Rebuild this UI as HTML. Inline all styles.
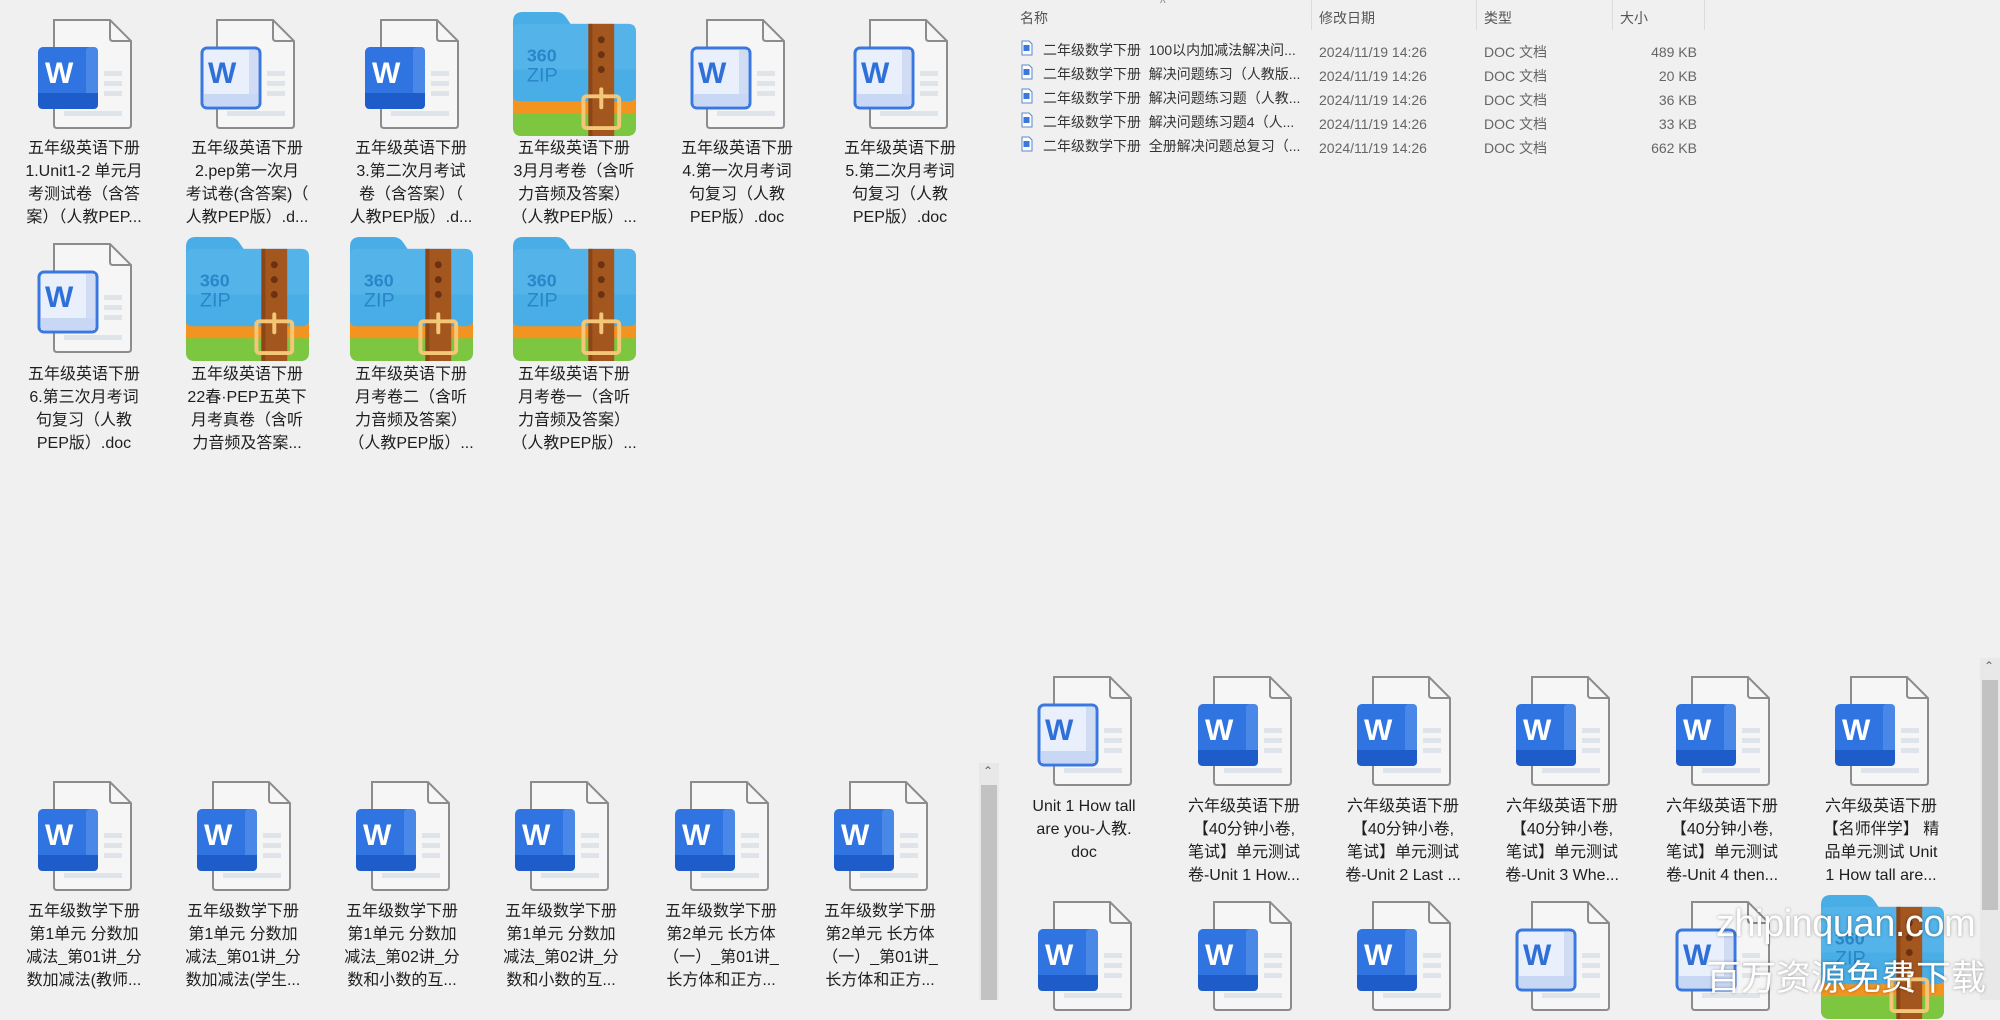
<!DOCTYPE html>
<html><head><meta charset="utf-8"><style>
body{margin:0;width:2000px;height:1000px;background:#f0f0f0;overflow:hidden;position:relative;font-family:"Liberation Sans","Noto Sans CJK SC",sans-serif;color:#1e1e1e}
.i{position:absolute}
.t{position:absolute;width:150px;text-align:center;font-size:16px;line-height:23px;white-space:nowrap}
.h{position:absolute;font-size:14px;color:#555;top:8px}
.r{position:absolute;font-size:14px;color:#333;white-space:nowrap}
.g{color:#666}
</style></head><body>
<svg width="0" height="0" style="position:absolute">
<defs>
<symbol id="page" viewBox="0 0 100 110">
<path d="M20 1H76L97 22V106Q97 109 94 109H23Q20 109 20 106Z" fill="#f6f6f6" stroke="#8c8c8c" stroke-width="2"/>
<path d="M76 1V19Q76 22 79 22H97" fill="none" stroke="#8c8c8c" stroke-width="2"/>
<rect x="70" y="52" width="18" height="5" fill="#dfe3ea"/><rect x="70" y="62" width="18" height="5" fill="#dfe3ea"/><rect x="70" y="72" width="18" height="5" fill="#dfe3ea"/><rect x="30" y="92" width="58" height="5" fill="#dfe3ea"/>
</symbol>
<symbol id="ds" viewBox="0 0 100 110">
<use href="#page"/>
<rect x="4" y="28" width="60" height="62" rx="5" fill="#2f74e0"/>
<rect x="52" y="28" width="12" height="62" rx="4" fill="#4a88e8"/>
<path d="M4 74H64V85Q64 90 59 90H9Q4 90 4 85Z" fill="#1d5cc9"/>
<text x="11" y="64" font-family="Liberation Sans" font-weight="bold" font-size="30" fill="#fff">W</text>
</symbol>
<symbol id="do" viewBox="0 0 100 110">
<use href="#page"/>
<rect x="5" y="29" width="58" height="60" rx="5" fill="#eaf0fb" stroke="#3a78e0" stroke-width="3"/>
<rect x="52" y="31" width="9" height="56" fill="#cfdcf4"/>
<rect x="7" y="75" width="54" height="12" fill="#c8d8f4"/>
<text x="11" y="64" font-family="Liberation Sans" font-weight="bold" font-size="30" fill="#2f6fd8">W</text>
</symbol>
<symbol id="zip" viewBox="0 0 128 128">
<path d="M2 12Q2 2 12 2H46Q52 2 56 8L60 14H118Q126 14 126 22V118Q126 127 117 127H11Q2 127 2 118Z" fill="#4aaee6"/>
<path d="M2 20Q2 14 10 14H118Q126 14 126 22V60H2Z" fill="#5bb8ec" opacity=".6"/>
<path d="M2 87Q2 92 10 92H118Q126 92 126 86V106H2Z" fill="#f39420"/>
<path d="M2 104H126V118Q126 127 117 127H11Q2 127 2 118Z" fill="#7cc640"/>
<rect x="78" y="14" width="26" height="113" fill="#a4561f"/>
<rect x="78" y="14" width="4" height="113" fill="#8b4516"/>
<circle cx="91" cy="30" r="3.5" fill="#6a3210"/><circle cx="91" cy="45" r="3.5" fill="#6a3210"/><circle cx="91" cy="60" r="3.5" fill="#6a3210"/>
<rect x="73" y="87" width="36" height="32" rx="3" fill="none" stroke="#f3c777" stroke-width="4"/>
<rect x="89" y="78" width="4" height="22" rx="2" fill="#f3c777"/>
<text x="16" y="52" font-family="Liberation Sans" font-size="18" fill="#2a86c8" font-weight="bold">360</text>
<text x="16" y="72" font-family="Liberation Sans" font-size="20" fill="#2a86c8">ZIP</text>
</symbol>
<symbol id="sm" viewBox="0 0 12 16"><path d="M1 1H8L11 4V15H1Z" fill="#fff" stroke="#5a88c8"/><rect x="2.5" y="5" width="6" height="6" fill="#3a78e0"/></symbol>
</defs></svg>

<!-- top-left row1 -->
<svg class="i" style="left:34px;top:19px" width="100" height="110"><use href="#ds"/></svg>
<svg class="i" style="left:197px;top:19px" width="100" height="110"><use href="#do"/></svg>
<svg class="i" style="left:361px;top:19px" width="100" height="110"><use href="#ds"/></svg>
<svg class="i" style="left:511px;top:10px" width="127" height="127"><use href="#zip"/></svg>
<svg class="i" style="left:687px;top:19px" width="100" height="110"><use href="#do"/></svg>
<svg class="i" style="left:850px;top:19px" width="100" height="110"><use href="#do"/></svg>
<div class="t" style="left:9px;top:137px">五年级英语下册<br>1.Unit1-2 单元月<br>考测试卷（含答<br>案）（人教PEP...</div>
<div class="t" style="left:172px;top:137px">五年级英语下册<br>2.pep第一次月<br>考试卷(含答案)（<br>人教PEP版）.d...</div>
<div class="t" style="left:336px;top:137px">五年级英语下册<br>3.第二次月考试<br>卷（含答案）（<br>人教PEP版）.d...</div>
<div class="t" style="left:499px;top:137px">五年级英语下册<br>3月月考卷（含听<br>力音频及答案）<br>（人教PEP版）...</div>
<div class="t" style="left:662px;top:137px">五年级英语下册<br>4.第一次月考词<br>句复习（人教<br>PEP版）.doc</div>
<div class="t" style="left:825px;top:137px">五年级英语下册<br>5.第二次月考词<br>句复习（人教<br>PEP版）.doc</div>
<!-- row2 -->
<svg class="i" style="left:34px;top:243px" width="100" height="110"><use href="#do"/></svg>
<svg class="i" style="left:184px;top:235px" width="127" height="127"><use href="#zip"/></svg>
<svg class="i" style="left:348px;top:235px" width="127" height="127"><use href="#zip"/></svg>
<svg class="i" style="left:511px;top:235px" width="127" height="127"><use href="#zip"/></svg>
<div class="t" style="left:9px;top:363px">五年级英语下册<br>6.第三次月考词<br>句复习（人教<br>PEP版）.doc</div>
<div class="t" style="left:172px;top:363px">五年级英语下册<br>22春·PEP五英下<br>月考真卷（含听<br>力音频及答案...</div>
<div class="t" style="left:336px;top:363px">五年级英语下册<br>月考卷二（含听<br>力音频及答案）<br>（人教PEP版）...</div>
<div class="t" style="left:499px;top:363px">五年级英语下册<br>月考卷一（含听<br>力音频及答案）<br>（人教PEP版）...</div>

<!-- bottom-left -->
<svg class="i" style="left:34px;top:781px" width="100" height="110"><use href="#ds"/></svg>
<svg class="i" style="left:193px;top:781px" width="100" height="110"><use href="#ds"/></svg>
<svg class="i" style="left:352px;top:781px" width="100" height="110"><use href="#ds"/></svg>
<svg class="i" style="left:511px;top:781px" width="100" height="110"><use href="#ds"/></svg>
<svg class="i" style="left:671px;top:781px" width="100" height="110"><use href="#ds"/></svg>
<svg class="i" style="left:830px;top:781px" width="100" height="110"><use href="#ds"/></svg>
<div class="t" style="left:9px;top:900px">五年级数学下册<br>第1单元 分数加<br>减法_第01讲_分<br>数加减法(教师...</div>
<div class="t" style="left:168px;top:900px">五年级数学下册<br>第1单元 分数加<br>减法_第01讲_分<br>数加减法(学生...</div>
<div class="t" style="left:327px;top:900px">五年级数学下册<br>第1单元 分数加<br>减法_第02讲_分<br>数和小数的互...</div>
<div class="t" style="left:486px;top:900px">五年级数学下册<br>第1单元 分数加<br>减法_第02讲_分<br>数和小数的互...</div>
<div class="t" style="left:646px;top:900px">五年级数学下册<br>第2单元 长方体<br>（一）_第01讲_<br>长方体和正方...</div>
<div class="t" style="left:805px;top:900px">五年级数学下册<br>第2单元 长方体<br>（一）_第01讲_<br>长方体和正方...</div>
<div style="position:absolute;left:979px;top:763px;width:20px;height:237px;background:#e8e8e8"></div>
<div style="position:absolute;left:981px;top:785px;width:16px;height:215px;background:#c2c2c2"></div>
<div style="position:absolute;left:983px;top:764px;font-size:12px;color:#666">&#8963;</div>

<!-- top-right list -->
<div style="position:absolute;left:1160px;top:-4px;font-size:12px;color:#888">^</div>
<div class="h" style="left:1020px">名称</div>
<div class="h" style="left:1319px">修改日期</div>
<div class="h" style="left:1484px">类型</div>
<div class="h" style="left:1620px">大小</div>
<div style="position:absolute;left:1311px;top:0;width:1px;height:30px;background:#dcdcdc"></div>
<div style="position:absolute;left:1476px;top:0;width:1px;height:30px;background:#dcdcdc"></div>
<div style="position:absolute;left:1612px;top:0;width:1px;height:30px;background:#dcdcdc"></div>
<div style="position:absolute;left:1704px;top:0;width:1px;height:30px;background:#dcdcdc"></div>

<svg class="i" style="left:1021px;top:40px" width="12" height="16"><use href="#sm"/></svg>
<div class="r" style="left:1043px;top:40px">二年级数学下册&nbsp; 100以内加减法解决问...</div>
<svg class="i" style="left:1021px;top:64px" width="12" height="16"><use href="#sm"/></svg>
<div class="r" style="left:1043px;top:64px">二年级数学下册&nbsp; 解决问题练习（人教版...</div>
<svg class="i" style="left:1021px;top:88px" width="12" height="16"><use href="#sm"/></svg>
<div class="r" style="left:1043px;top:88px">二年级数学下册&nbsp; 解决问题练习题（人教...</div>
<svg class="i" style="left:1021px;top:112px" width="12" height="16"><use href="#sm"/></svg>
<div class="r" style="left:1043px;top:112px">二年级数学下册&nbsp; 解决问题练习题4（人...</div>
<svg class="i" style="left:1021px;top:136px" width="12" height="16"><use href="#sm"/></svg>
<div class="r" style="left:1043px;top:136px">二年级数学下册&nbsp; 全册解决问题总复习（...</div>
<div class="r g" style="left:1319px;top:40px;line-height:24px">2024/11/19 14:26<br>2024/11/19 14:26<br>2024/11/19 14:26<br>2024/11/19 14:26<br>2024/11/19 14:26</div>
<div class="r g" style="left:1484px;top:40px;line-height:24px">DOC 文档<br>DOC 文档<br>DOC 文档<br>DOC 文档<br>DOC 文档</div>
<div class="r g" style="left:1600px;width:97px;text-align:right;top:40px;line-height:24px">489 KB<br>20 KB<br>36 KB<br>33 KB<br>662 KB</div>

<!-- bottom-right -->
<svg class="i" style="left:1034px;top:676px" width="100" height="110"><use href="#do"/></svg>
<svg class="i" style="left:1194px;top:676px" width="100" height="110"><use href="#ds"/></svg>
<svg class="i" style="left:1353px;top:676px" width="100" height="110"><use href="#ds"/></svg>
<svg class="i" style="left:1512px;top:676px" width="100" height="110"><use href="#ds"/></svg>
<svg class="i" style="left:1672px;top:676px" width="100" height="110"><use href="#ds"/></svg>
<svg class="i" style="left:1831px;top:676px" width="100" height="110"><use href="#ds"/></svg>
<div class="t" style="left:1009px;top:795px">Unit 1 How tall<br>are you-人教.<br>doc</div>
<div class="t" style="left:1169px;top:795px">六年级英语下册<br>【40分钟小卷,<br>笔试】单元测试<br>卷-Unit 1 How...</div>
<div class="t" style="left:1328px;top:795px">六年级英语下册<br>【40分钟小卷,<br>笔试】单元测试<br>卷-Unit 2 Last ...</div>
<div class="t" style="left:1487px;top:795px">六年级英语下册<br>【40分钟小卷,<br>笔试】单元测试<br>卷-Unit 3 Whe...</div>
<div class="t" style="left:1647px;top:795px">六年级英语下册<br>【40分钟小卷,<br>笔试】单元测试<br>卷-Unit 4 then...</div>
<div class="t" style="left:1806px;top:795px">六年级英语下册<br>【名师伴学】 精<br>品单元测试 Unit<br>1 How tall are...</div>
<svg class="i" style="left:1034px;top:901px" width="100" height="110"><use href="#ds"/></svg>
<svg class="i" style="left:1194px;top:901px" width="100" height="110"><use href="#ds"/></svg>
<svg class="i" style="left:1353px;top:901px" width="100" height="110"><use href="#ds"/></svg>
<svg class="i" style="left:1512px;top:901px" width="100" height="110"><use href="#do"/></svg>
<svg class="i" style="left:1672px;top:901px" width="100" height="110"><use href="#do"/></svg>
<svg class="i" style="left:1819px;top:893px" width="127" height="127"><use href="#zip"/></svg>
<div style="position:absolute;left:1980px;top:658px;width:20px;height:342px;background:#e8e8e8"></div>
<div style="position:absolute;left:1982px;top:680px;width:16px;height:230px;background:#c2c2c2"></div>
<div style="position:absolute;left:1984px;top:659px;font-size:12px;color:#666">&#8963;</div>

<div style="position:absolute;left:1716px;top:903px;font-size:38px;color:#fff;text-shadow:0 0 3px rgba(0,0,0,.35);white-space:nowrap;letter-spacing:-0.5px">zhipinquan.com</div>
<div style="position:absolute;left:1706px;top:950px;font-size:35px;color:#fff;text-shadow:0 0 3px rgba(0,0,0,.35);white-space:nowrap">百万资源免费下载</div>
</body></html>
